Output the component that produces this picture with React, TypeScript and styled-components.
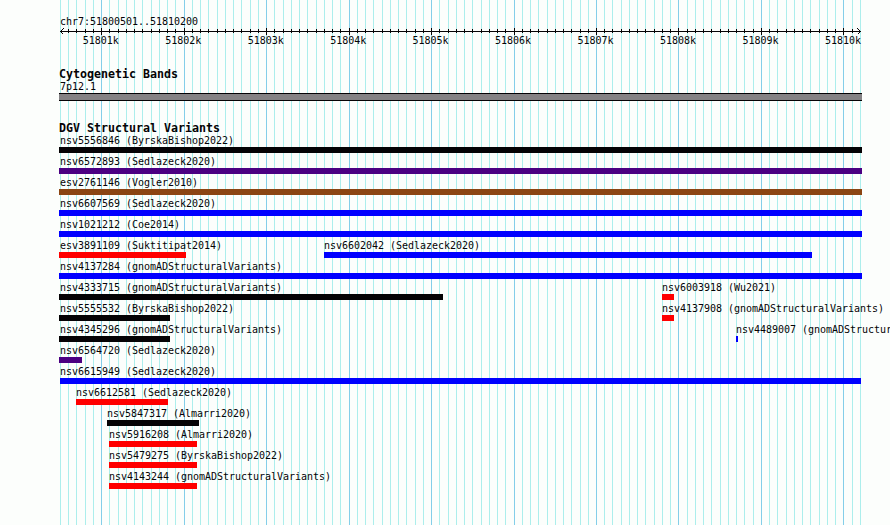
import styled, { createGlobalStyle } from 'styled-components';

const REGION_START = 51800501;
const TRACK_LEFT = 60;
const PX_PER_BASE = 800 / 9700;

const COLORS = {
    black: '#050305',
    indigo: '#4b0082',
    brown: '#8b4513',
    blue: '#0000ff',
    red: '#ff0000',
};

type Feature = {
    name: string,
    study: string,
    color: keyof typeof COLORS,
    start: number,
    end: number,
};

const rows: Feature[][] = [
    [{ name: 'nsv5556846', study: 'ByrskaBishop2022', color: 'black', start: 59, end: 862 }],
    [{ name: 'nsv6572893', study: 'Sedlazeck2020', color: 'indigo', start: 59, end: 862 }],
    [{ name: 'esv2761146', study: 'Vogler2010', color: 'brown', start: 59, end: 862 }],
    [{ name: 'nsv6607569', study: 'Sedlazeck2020', color: 'blue', start: 59, end: 862 }],
    [{ name: 'nsv1021212', study: 'Coe2014', color: 'blue', start: 59, end: 862 }],
    [
        { name: 'esv3891109', study: 'Suktitipat2014', color: 'red', start: 59, end: 186 },
        { name: 'nsv6602042', study: 'Sedlazeck2020', color: 'blue', start: 324, end: 812 },
    ],
    [{ name: 'nsv4137284', study: 'gnomADStructuralVariants', color: 'blue', start: 59, end: 862 }],
    [
        { name: 'nsv4333715', study: 'gnomADStructuralVariants', color: 'black', start: 59, end: 443 },
        { name: 'nsv6003918', study: 'Wu2021', color: 'red', start: 662, end: 674 },
    ],
    [
        { name: 'nsv5555532', study: 'ByrskaBishop2022', color: 'black', start: 59, end: 170 },
        { name: 'nsv4137908', study: 'gnomADStructuralVariants', color: 'red', start: 662, end: 674 },
    ],
    [
        { name: 'nsv4345296', study: 'gnomADStructuralVariants', color: 'black', start: 59, end: 170 },
        { name: 'nsv4489007', study: 'gnomADStructuralVariants', color: 'blue', start: 736, end: 738 },
    ],
    [{ name: 'nsv6564720', study: 'Sedlazeck2020', color: 'indigo', start: 59, end: 82 }],
    [{ name: 'nsv6615949', study: 'Sedlazeck2020', color: 'blue', start: 60, end: 861 }],
    [{ name: 'nsv6612581', study: 'Sedlazeck2020', color: 'red', start: 76, end: 168 }],
    [{ name: 'nsv5847317', study: 'Almarri2020', color: 'black', start: 107, end: 199 }],
    [{ name: 'nsv5916208', study: 'Almarri2020', color: 'red', start: 109, end: 197 }],
    [{ name: 'nsv5479275', study: 'ByrskaBishop2022', color: 'red', start: 109, end: 197 }],
    [{ name: 'nsv4143244', study: 'gnomADStructuralVariants', color: 'red', start: 109, end: 197 }],
];

const ticks = Array.from({ length: 98 }, (_, i) => {
    const base = 51800500 + i * 100;
    return {
        base,
        x: Math.round(TRACK_LEFT + (base - REGION_START) * PX_PER_BASE),
        major: base % 1000 === 0,
    };
});

const GlobalStyle = createGlobalStyle`
    body {
        margin: 0;
        background: #fcfefc;
        overflow: hidden;
    }
`;

const Browser = styled.main`
    position: relative;
    width: 890px;
    height: 525px;
    box-sizing: border-box;
    padding-top: 16px;
    overflow: hidden;
    color: #050305;
    font: 10px/12px 'DejaVu Sans Mono', monospace;
    letter-spacing: -0.02px;
    white-space: pre;
`;

const GridLines = styled.svg`
    position: absolute;
    inset: 0;
    z-index: -1;
`;

const Position = styled.div`
    height: 11px;
    margin-left: 60px;
`;

const Ruler = styled.svg`
    display: block;
`;

const RulerNumbers = styled.div`
    display: grid;
    grid-template-columns: repeat(10, 82.47px);
    height: 12px;
    padding-left: 59.5px;
`;

const RulerNumber = styled.span`
    text-align: center;
`;

const TrackTitle = styled.h2`
    height: 12px;
    margin: 0 0 0 59px;
    font: bold 11.63px/12px 'DejaVu Sans Mono', monospace;
    letter-spacing: 0;
`;

const CytobandTrack = styled.section`
    margin-top: 21px;
`;

const CytobandName = styled.div`
    height: 12px;
    margin: 1px 0 0 60px;
`;

const Cytoband = styled.div`
    box-sizing: border-box;
    width: 803px;
    height: 8px;
    margin-left: 59px;
    border: solid #050305;
    border-width: 1px 0;
    background: #848284;
`;

const VariantTrack = styled.section`
    margin-top: 21px;
`;

const VariantRow = styled.div`
    display: grid;
    height: 21px;
`;

const Variant = styled.div<{ $start: number }>`
    grid-area: 1 / 1;
    margin-left: ${(props) => props.$start}px;
`;

const VariantName = styled.div<{ $indent: number }>`
    height: 13px;
    padding-left: ${(props) => props.$indent}px;
    line-height: 14px;
`;

const VariantBar = styled.div<{ $width: number, $color: string }>`
    width: ${(props) => props.$width}px;
    height: 6px;
    background: ${(props) => props.$color};
`;

function App() {
    return (
        <Browser>
            <GlobalStyle />
            <GridLines width="890" height="525" shapeRendering="crispEdges">
                {ticks.map(({ base, x, major }) => (
                    <rect key={base} x={x} width="1" height="525" fill={major ? '#84cee9' : '#aceeec'} />
                ))}
            </GridLines>

            <Position>chr7:51800501..51810200</Position>
            <Ruler width="890" height="8" shapeRendering="crispEdges">
                <rect x="60" y="4" width="801" height="1" fill="#050305" />
                {ticks.slice(1, -1).map(({ base, x, major }) => (
                    <rect key={base} x={x} y={major ? 1 : 2} width="1" height={major ? 7 : 4} fill="#050305" />
                ))}
                <path d="M63.5 1.5L60.5 4.5L63.5 7.5M857.5 1.5L860.5 4.5L857.5 7.5" fill="none" stroke="#050305" />
            </Ruler>
            <RulerNumbers>
                {ticks.filter(({ major }) => major).map(({ base }) => (
                    <RulerNumber key={base}>{`${base / 1000}k`}</RulerNumber>
                ))}
            </RulerNumbers>

            <CytobandTrack>
                <TrackTitle>Cytogenetic Bands</TrackTitle>
                <CytobandName>7p12.1</CytobandName>
                <Cytoband />
            </CytobandTrack>

            <VariantTrack>
                <TrackTitle>DGV Structural Variants</TrackTitle>
                {rows.map((row) => (
                    <VariantRow key={row[0].name}>
                        {row.map(({ name, study, color, start, end }) => (
                            <Variant key={name} $start={start}>
                                <VariantName $indent={start === 59 ? 1 : 0}>{`${name} (${study})`}</VariantName>
                                <VariantBar $width={end - start} $color={COLORS[color]} />
                            </Variant>
                        ))}
                    </VariantRow>
                ))}
            </VariantTrack>
        </Browser>
    );
}

export default App;
